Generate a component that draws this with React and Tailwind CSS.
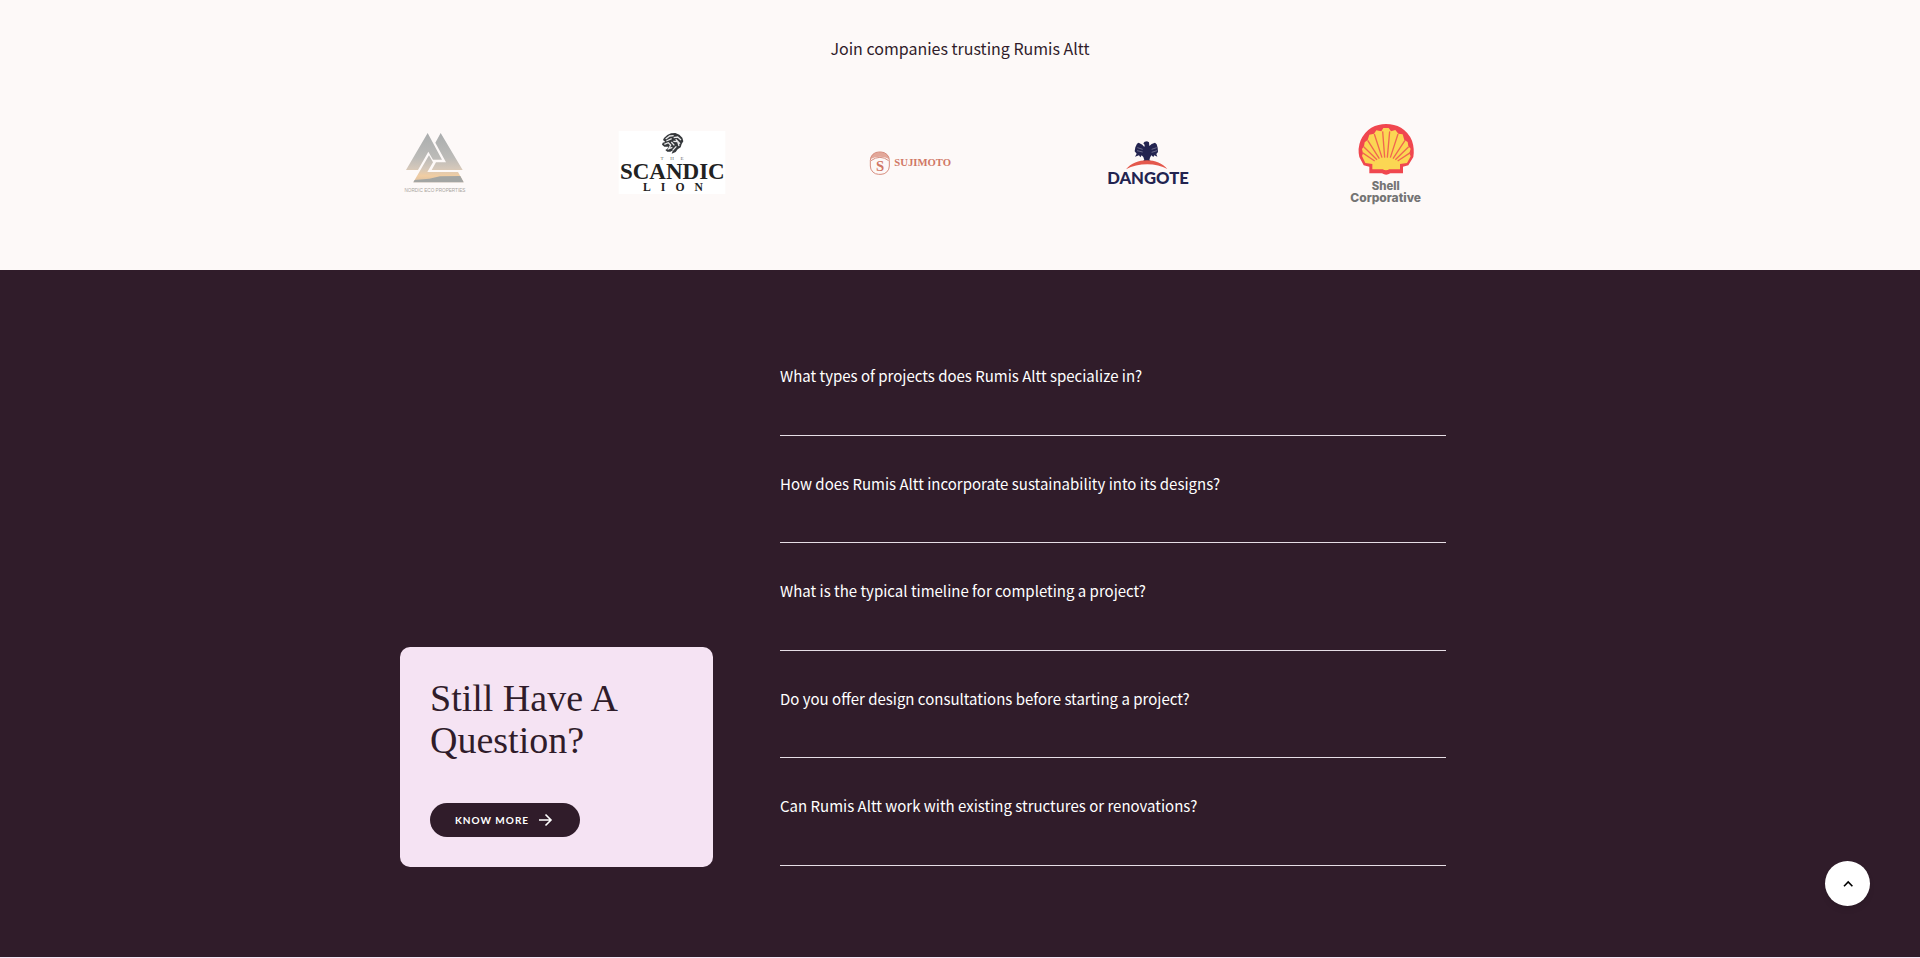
import React from "react";

const faqs = [
  "What types of projects does Rumis Altt specialize in?",
  "How does Rumis Altt incorporate sustainability into its designs?",
  "What is the typical timeline for completing a project?",
  "Do you offer design consultations before starting a project?",
  "Can Rumis Altt work with existing structures or renovations?",
];

const NordicLogo = () => (
  <svg viewBox="-48 0 360 288" className="h-24 w-[120px]" role="img" aria-label="Nordic Eco Properties">
    <defs>
      <linearGradient id="nordic" gradientUnits="userSpaceOnUse" x1="0" y1="54" x2="0" y2="202">
        <stop offset="0" stopColor="#aaadae" />
        <stop offset="0.5" stopColor="#bcbbb8" />
        <stop offset="0.72" stopColor="#d5c8ba" />
        <stop offset="0.87" stopColor="#f1cda2" />
        <stop offset="1" stopColor="#d9bfa3" />
      </linearGradient>
    </defs>
    <g fill="url(#nordic)">
      <path d="M113 54 L156 134 L129 134 L115 110 L84 165 L48 165Z" />
      <path d="M152 54 L218 165 L125 165 L138 142 L168 142 L136 83Z" />
      <path d="M117 121 L129 142 L112 171 L204 171 L221 202 L70 202Z" />
    </g>
    <path d="M74 195 L118 191 L150 184 L211 183 L221 202 L70 202Z" fill="#a3a5a3" />
    <text x="135" y="232" textAnchor="middle" fontSize="14" fill="#a9a49d" className="font-['Liberation_Sans_Narrow','Liberation_Sans',sans-serif]">
      NORDIC ECO PROPERTIES
    </text>
  </svg>
);

const ScandicLogo = () => (
  <svg viewBox="21 -15 360 288" className="h-24 w-[120px]" role="img" aria-label="The Scandic Lion">
    <rect x="41" y="33" width="320" height="189" fill="#fff" />
    <path
      d="M177 54 L187 45 L198 40 L211 39 L223 44 L232 53 L235 64 L230 72 L227 82 L218 88 L212 96 L200 101 L204 91 L196 95 L187 95 L181 90 L187 86 L190 80 L178 80 L171 74 L173 68 L181 66 L174 60Z"
      fill="#35383b"
    />
    <path
      d="M182 57 L194 48 L206 47 M184 63 L200 56 M178 73 L190 68 L197 75 L191 86 L202 82 M206 53 L218 51 L228 60 M205 64 L218 65 L222 78 M212 58 L225 71 M203 91 L214 79 M199 66 L208 76"
      fill="none" stroke="#e8e8e9" strokeWidth="4"
    />
    <g fill="#222" textAnchor="middle" className="font-['Liberation_Serif',serif]">
      <text x="211" y="120" fontSize="15" fill="#666" className="tracking-[20px]">THE</text>
      <text x="202" y="178" fontSize="69" fontWeight="700">SCANDIC</text>
      <text x="219" y="213" fontSize="35" fontWeight="700" className="tracking-[30px]">LION</text>
    </g>
  </svg>
);

const SujimotoLogo = () => (
  <svg viewBox="-30 -75 360 288" className="h-24 w-[120px]" role="img" aria-label="Sujimoto">
    <path d="M31 57 A28 21 0 0 1 88 57 Q60 43 31 57Z" fill="#e2a799" />
    <rect x="31" y="36" width="57" height="67" rx="25" fill="none" stroke="#d78d7e" strokeWidth="3" />
    <path d="M33 62 Q60 42 86 62" fill="none" stroke="#d78d7e" strokeWidth="3" />
    <g fill="#d07765" fontWeight="700" className="font-['Liberation_Serif',serif]">
      <text x="60" y="94" textAnchor="middle" fontSize="44">S</text>
      <text x="188" y="78" textAnchor="middle" fontSize="32">SUJIMOTO</text>
    </g>
  </svg>
);

const DangoteLogo = () => (
  <svg viewBox="-21 -45 360 288" className="h-24 w-[120px]" role="img" aria-label="Dangote">
    <path
      d="M149 45 L145 40 L149 35 L156 34 L162 37 L163 48 L170 42 L180 38 L185 43 L188 53 L189 66 L184 72 L187 80 L178 76 L175 81 L169 76 L165 83 L163 91 L169 94 L143 94 L148 90 L145 81 L140 76 L136 82 L132 76 L120 80 L125 71 L119 64 L121 52 L126 41 L131 38 L142 44 L148 51Z"
      fill="#232450"
    />
    <path d="M127 53 L143 58 M126 62 L143 66 M185 53 L170 58 M186 62 L170 67" stroke="#8c8ca5" strokeWidth="2" />
    <path d="M93 118 C122 82 189 82 217 117 C184 98 129 98 93 118Z" fill="#e4584c" />
    <text x="159" y="163" textAnchor="middle" fontSize="50" fontWeight="900" fill="#232450" className="font-[Lato,sans-serif]">
      DANGOTE
    </text>
  </svg>
);

const ShellLogo = () => (
  <svg viewBox="-27 0 360 288" className="h-24 w-[120px]" role="img" aria-label="Shell Corporative">
    <path
      d="M103 175 L103 155 L86 151 L73 126 Q67 101 77 76 Q88 51 109 38 Q130 27 153 27 Q178 27 198 38 Q221 52 231 77 Q239 101 235 126 L220 151 L204 155 L204 175 L166 175 Q153 183 141 175Z"
      fill="#f0474f"
    />
    <path
      d="M112 163 L112 147 L91 144 L81 123 L84 115 L81 102 L87 94 L89 82 L98 75 L103 59 L117 56 L124 46 L139 49 L145 39 L161 39 L168 49 L181 45 L190 56 L203 58 L208 75 L218 81 L220 94 L227 101 L223 115 L227 124 L216 144 L195 147 L195 163 L163 163 Q153 169 143 163Z"
      fill="#fbd653"
    />
    <path
      d="M149 128 L143 49 M157 128 L164 49 M141 128 L118 57 M166 128 L189 57 M133 131 L98 76 M174 131 L210 76 M126 134 L86 95 M181 134 L221 95 M119 138 L82 113 M188 138 L226 113"
      stroke="#f1674f" strokeWidth="4"
    />
    <g fill="#747474" fontWeight="800" textAnchor="middle" className="font-[Inter,sans-serif]">
      <text x="152" y="225" fontSize="34">Shell</text>
      <text x="152" y="260" fontSize="36">Corporative</text>
    </g>
  </svg>
);

const App = () => {
  return (
    <div className="bg-[#fdf9f8] font-['Noto_Sans_CJK_SC','Noto_Sans',sans-serif] text-[#301c2a]">
      <section className="pt-9 pb-[59px]">
        <h2 className="text-center text-[16px] leading-6">Join companies trusting Rumis Altt</h2>
        <div className="mx-auto mt-[55px] max-w-[1290px] pr-[100px]">
          <div className="grid grid-cols-5 place-items-center">
            <NordicLogo />
            <ScandicLogo />
            <SujimotoLogo />
            <DangoteLogo />
            <ShellLogo />
          </div>
        </div>
      </section>

      <section className="border-b border-[#f5e3f3] bg-[#301c2a] pt-[58px] pb-[90px]">
        <div className="mx-auto flex max-w-[1120px] items-end pr-[74px]">
          <div className="mr-[67px] w-[313px] shrink-0 rounded-[10px] bg-[#f5e3f3] p-[30px]">
            <h3 className="font-['Liberation_Serif',serif] text-[38px] leading-[42px]">
              Still Have A
              <br />
              Question?
            </h3>
            <a
              href="#contact"
              className="mt-[42px] flex h-[34px] w-[150px] items-center gap-1.5 rounded-full bg-[#301c2a] pl-[25px] font-[Lato,sans-serif] text-[10px] font-bold tracking-[1px] text-white"
            >
              KNOW MORE
              <svg viewBox="0 0 20 20" className="size-5" fill="none" stroke="currentColor" strokeWidth="1.6">
                <path d="M4 10 H15.5 M10.5 4.5 L16 10 L10.5 15.5" />
              </svg>
            </a>
          </div>

          <div className="grid min-h-[539px] flex-1 auto-rows-fr pb-px">
            {faqs.map((q) => (
              <button key={q} type="button" className="flex items-start border-b border-[#e6dde5] pt-9 text-left text-[15px] leading-6 text-white">
                {q}
              </button>
            ))}
          </div>
        </div>
      </section>

      <button
        type="button"
        aria-label="Back to top"
        className="fixed right-[50px] bottom-[52px] flex size-[45px] items-center justify-center rounded-full bg-white text-black shadow-md"
      >
        <svg viewBox="0 0 12 8" className="h-2 w-3" fill="none" stroke="currentColor" strokeWidth="1.6">
          <path d="M2 6.2 L6.2 2 L10.4 6.2" />
        </svg>
      </button>
    </div>
  );
};

export default App;
